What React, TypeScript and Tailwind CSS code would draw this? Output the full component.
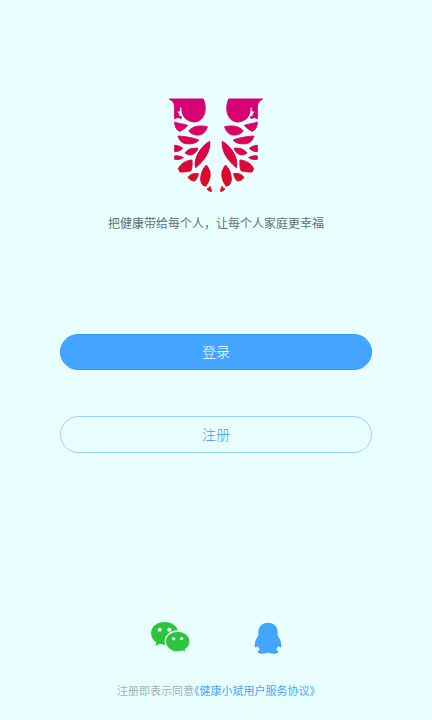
function Wing() {
  return (
    <g>
      <path d="M28 27H130C137 45 138 64 130 79C122 93 109 98 96 95C84 92 75 86 71 79L67 69L65 51L59 51V63L53 63L51 67L57 71L56 77L64 80L63 86L54 82L44 86V48C42 37 36 31 28 27Z" />
      <path d="M44 96C54 101 68 101 83 106C77 113 69 120 59 124C49 120 44 109 44 96Z" />
      <path d="M86 123C98 109 117 105 142 110C137 127 126 137 109 135C98 134 92 129 86 123Z" />
      <path d="M54 138C70 139 96 142 116 150C111 159 95 163 77 161C63 158 57 149 54 138Z" />
      <path d="M149 154C152 177 141 205 107 233C99 208 121 169 149 154Z" />
      <path d="M44 166C53 166 62 170 68 175C63 181 54 185 44 185Z" />
      <path d="M75 189C83 177 97 173 114 175C110 188 96 199 82 193Z" />
      <path d="M44 198C54 196 64 199 70 203C63 208 54 209 44 208Z" />
      <path d="M96 210C97 222 96 233 93 242C82 245 69 247 60 246L55 236C63 220 77 212 96 210Z" />
      <path d="M139 225C154 243 155 264 138 288C129 288 123 283 122 267C123 249 128 236 139 225Z" />
      <path d="M84 262C93 251 103 249 115 251C114 259 110 268 104 273C95 273 89 269 84 262Z" />
      <path d="M150 289C153 294 154 300 154 305C149 304 145 301 141 297C145 296 148 293 150 289Z" />
    </g>
  );
}

function Logo() {
  return (
    <svg viewBox="0 0 336 336" className="size-28" role="img" aria-label="健康小斌">
      <defs>
        <linearGradient id="wing" gradientUnits="userSpaceOnUse" x1="0" y1="27" x2="0" y2="307">
          <stop offset="0" stopColor="#d6007c" />
          <stop offset="0.3" stopColor="#d80468" />
          <stop offset="0.65" stopColor="#d8083c" />
          <stop offset="1" stopColor="#e00a18" />
        </linearGradient>
      </defs>
      <g fill="url(#wing)" stroke="url(#wing)" strokeWidth="3" strokeLinejoin="round">
        <Wing />
        <g transform="translate(336 0) scale(-1 1)">
          <Wing />
        </g>
      </g>
    </svg>
  );
}

function WeChatIcon() {
  return (
    <svg viewBox="0 4 120 96" className="h-8 w-10" aria-hidden="true">
      <g fill="#2dc540">
        <path d="M44 4C21 4 3 18 3 38C3 49 9 58 19 65L16 76L30 69C34 71 39 72 44 72C67 72 85 57 85 38C85 18 67 4 44 4Z" />
        <path
          d="M83 31C62 31 46 44 46 62C46 80 62 94 83 94C88 94 93 93 97 91L110 98L106 87C115 81 120 73 120 62C120 45 103 31 83 31Z"
          stroke="#e9ffff"
          strokeWidth="4"
        />
      </g>
      <g fill="#e9ffff">
        <circle cx="29" cy="27" r="6" />
        <circle cx="58" cy="27" r="6" />
        <circle cx="71" cy="54" r="5" />
        <circle cx="95" cy="54" r="5" />
      </g>
    </svg>
  );
}

function QQIcon() {
  return (
    <svg viewBox="0 0 84 96" className="h-8 w-7" aria-hidden="true">
      <path
        fill="#43a5ff"
        d="M42 2C24 2 13 14 13 31C13 36 14 39 12 43C5 52 2 61 2 70C2 78 6 78 12 71C13 76 15 79 18 83C13 85 11 87 11 90C12 95 21 96 29 95C35 94 38 92 42 92C46 92 49 94 55 95C63 96 72 95 73 90C73 87 71 85 66 83C69 79 71 76 72 71C78 78 82 78 82 70C82 61 79 52 72 43C70 39 71 36 71 31C71 14 60 2 42 2Z"
      />
    </svg>
  );
}

export default function App() {
  return (
    <main className="flex min-h-screen flex-col items-center bg-[#e9ffff] px-15 pt-[90px] pb-[21px] font-['Liberation_Sans','Noto_Sans_CJK_SC',sans-serif]">
      <Logo />
      <p className="mt-3 text-xs leading-5 text-[#5f7272]">把健康带给每个人，让每个人家庭更幸福</p>

      <div className="mt-[100px] flex w-full flex-col gap-[46px]">
        <button
          type="button"
          className="h-9 w-full rounded-full border border-[#349bfb] bg-[#43a5ff] text-sm font-light text-white"
        >
          登录
        </button>
        <button
          type="button"
          className="h-[37px] w-full rounded-full border border-[#94d2ff] text-sm font-light text-[#2f9bff]"
        >
          注册
        </button>
      </div>

      <div className="mt-auto flex items-center gap-16">
        <button type="button" aria-label="微信登录">
          <WeChatIcon />
        </button>
        <button type="button" aria-label="QQ登录">
          <QQIcon />
        </button>
      </div>

      <p className="mt-[29px] text-[11px] leading-4 text-[#9fb3b3]">
        注册即表示同意
        <a href="#agreement" className="text-[#43a5ff] [font-feature-settings:'halt']">
          《健康小斌用户服务协议》
        </a>
      </p>
    </main>
  );
}
